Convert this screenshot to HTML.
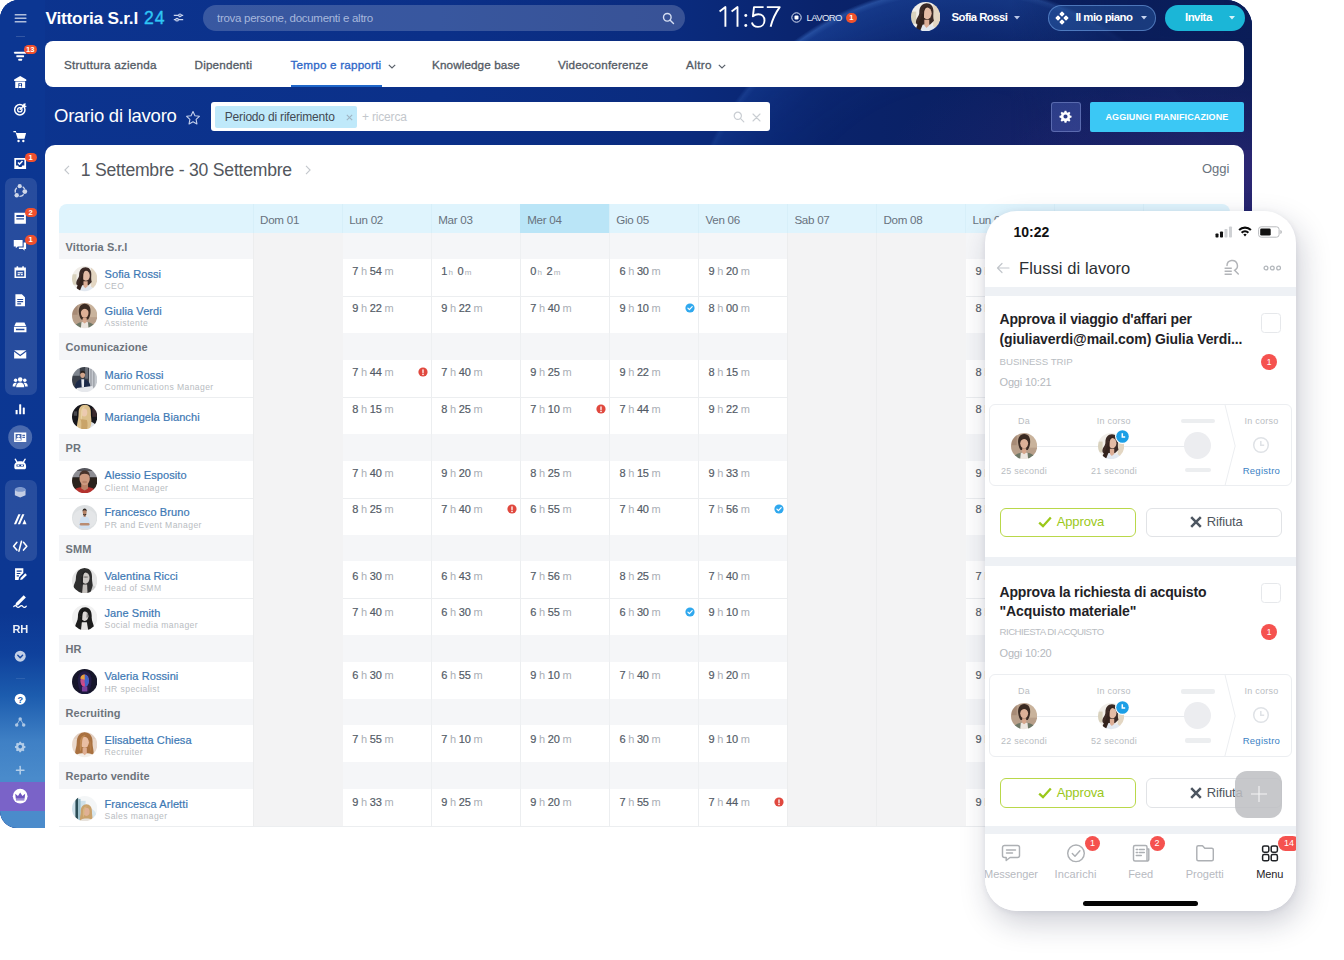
<!DOCTYPE html>
<html lang="it"><head><meta charset="utf-8"><title>Orario di lavoro</title>
<style>

*{box-sizing:border-box;margin:0;padding:0}
html,body{width:1344px;height:960px;overflow:hidden;background:#fff}
body{font-family:"Liberation Sans",sans-serif;position:relative;color:#525c69}
#win{position:absolute;left:0;top:0;width:1252px;height:828px;border-radius:19px 26px 0 17px;overflow:hidden;
 background:#0b2d82}
#bg{position:absolute;left:0;top:0;width:1252px;height:828px;
 background:
  radial-gradient(ellipse 240px 110px at 1240px 175px, rgba(58,42,128,.42), rgba(58,42,128,0) 100%),
  radial-gradient(ellipse 330px 130px at 1215px 165px, rgba(75,48,135,.42), rgba(70,40,110,0) 100%),
  linear-gradient(90deg,#0c348f 0%,#0b3089 35%,#0a2b7e 54%,#0a236b 66%,#0a1f60 82%,#0a1d5a 100%)}
#ring{position:absolute;left:0;top:0;width:1252px;height:150px;
 background:
  linear-gradient(90deg, rgba(10,30,92,0) 1010px, rgba(10,30,92,.85) 1110px, rgba(10,29,88,1) 1252px),
  radial-gradient(circle at 960px 262px, rgba(40,100,210,0) 170px, rgba(40,100,210,.12) 225px, rgba(52,118,225,.27) 268px, rgba(80,145,240,.38) 273px, rgba(40,100,210,0) 277px);
 -webkit-mask-image:linear-gradient(180deg,#000 0,#000 36px,rgba(0,0,0,.5) 90px,rgba(0,0,0,.32) 150px);mask-image:linear-gradient(180deg,#000 0,#000 36px,rgba(0,0,0,.5) 90px,rgba(0,0,0,.32) 150px)}
/* sidebar */
#side{position:absolute;left:0;top:0;width:45px;height:828px;
 background:linear-gradient(180deg,#0c3692 0%,#0c3792 74%,#0f419c 79%,#1c5cae 84%,#3f80c5 89.500%,#4a8bcb 94%,#4b8bcb 100%)}
#side .grp{position:absolute;left:4.600px;width:32px;border-radius:7px;background:rgba(255,255,255,.115)}
#side .ic{position:absolute;left:10.800px;width:18.400px;height:18.400px}
#side .ic svg{display:block;width:18.400px;height:18.400px;overflow:visible}
#side .bd{position:absolute;height:9.400px;min-width:12px;border-radius:5px;background:#f0502d;color:#fff;font-size:7.600px;font-weight:700;line-height:9.600px;text-align:center;padding:0 2.500px}
/* header */
.hx{position:absolute;color:#fff;white-space:nowrap}
/* nav */
#nav{position:absolute;left:47px;top:42px;width:1197px;height:45px;background:#fff;border-radius:8px}
#nav span{position:absolute;top:.800px;line-height:46px;font-size:11.700px;font-weight:400;color:#555c66;-webkit-text-stroke:.32px currentColor;white-space:nowrap}
/* toolbar */
#title{position:absolute;left:54px;top:104px;font-size:18.2px;color:#fff;line-height:24px;white-space:nowrap;letter-spacing:-.35px}
#search{position:absolute;left:211px;top:102px;width:559px;height:29px;background:#fff;border-radius:3px}
#chip{position:absolute;left:4px;top:3px;width:142px;height:23px;background:#bfe9fa;border-radius:2px;font-size:12px;line-height:23px;color:#424a54;padding-left:9px;white-space:nowrap}
/* card */
#card{position:absolute;left:45px;top:145px;width:1199px;height:700px;background:#fff;border-radius:10px 10px 0 0}
#tbl{position:absolute;left:14px;top:59px;width:1171px}
#thead{position:absolute;left:0;top:0;width:1171px;height:28.800px;background:#dff4fd;border-radius:8px 8px 0 0;overflow:hidden}
.hd{position:absolute;top:0;height:28.800px;border-left:1px solid #d7eff9}
.hd span{position:absolute;left:6.400px;top:0;line-height:31px;font-size:11.600px;color:#68727d;white-space:nowrap;letter-spacing:-.27px}
.hd.today{background:#bae5f7;border-left-color:#bae5f7}
#tbody{position:absolute;left:0;top:28.800px;width:1171px;overflow:hidden}
.cl{position:absolute;top:0;bottom:0;border-left:1px solid #eceef0}
.cl.we{background:#f3f4f5}
.gr{position:absolute;left:0;width:1171px;background:rgba(239,241,244,.62)}
.gr span{position:absolute;left:6.600px;top:0;line-height:28px;font-size:11px;font-weight:700;color:#6d747c;white-space:nowrap;letter-spacing:.06px}
.pr{position:absolute;left:0;width:1171px}
.pr.sp{border-bottom:1px solid #eceef0}
.wo{position:absolute;top:0;bottom:1px;background:#f3f3f4;border-left:1px solid #ecedee;z-index:2}
.pr .av{position:absolute;left:12.900px;top:7px}
.pn{position:absolute;left:45.500px;top:7.700px;white-space:nowrap}
.pn a{display:block;font-size:11px;line-height:14px;color:#3c78b4;letter-spacing:.09px;-webkit-text-stroke:.2px currentColor}
.pn em{display:block;font-style:normal;font-size:8.600px;line-height:10px;color:#b8bcc1;letter-spacing:.4px;margin-top:.3px}
.pn.ns{top:13px}
.tc{position:absolute;top:0;width:89px;height:100%;padding:5.900px 0 0 10.500px;font-size:11px;line-height:12px;white-space:nowrap;color:#a9aeb5;letter-spacing:-.22px}
.tc b{font-weight:400;color:#535b66;-webkit-text-stroke:.18px #535b66}
.tc i{font-style:normal}
.tc i.s{font-size:8px;margin:0 1.700px 0 1.300px;letter-spacing:0}
.tc .st{position:absolute;right:3px;top:6.700px}

</style></head>
<body>
<svg width="0" height="0" style="position:absolute"><defs><filter id="avb" x="-10%" y="-10%" width="120%" height="120%"><feGaussianBlur stdDeviation=".55"/></filter></defs></svg>
<div id="win">
<div id="bg"></div><div id="ring"></div>
<div id="side"><div class="grp" style="top:178px;height:217px"></div><div class="grp" style="top:479.500px;height:81.500px"></div><div style="position:absolute;left:0;top:781.700px;width:45px;height:29.100px;background:#7a63c8"></div><div style="position:absolute;left:16px;top:36px;width:8.500px;height:1px;background:rgba(255,255,255,.16)"></div><div style="position:absolute;left:16px;top:678px;width:8.500px;height:1px;background:rgba(255,255,255,.1)"></div><div class="ic" style="top:8.8px;opacity:1"><svg viewBox="0 0 20 20" fill="#fff"><rect x="4" y="5.400" width="12.800" height="1.700" rx=".4" opacity=".68"/><rect x="4" y="9.200" width="12.800" height="1.700" rx=".4" opacity=".68"/><rect x="4" y="13" width="12.800" height="1.700" rx=".4" opacity=".68"/></svg></div><div class="ic" style="top:46.8px;opacity:1"><svg viewBox="0 0 20 20" fill="#fff"><rect x="3.5" y="5.2" width="13" height="2.1" rx=".4"/><rect x="5.8" y="9" width="8.4" height="2.1" rx=".4"/><rect x="8" y="12.8" width="4" height="2.1" rx=".4"/></svg></div><div class="ic" style="top:72.8px;opacity:1"><svg viewBox="0 0 20 20" fill="#fff"><path d="M10 3.2 3.4 7v1.6h13.2V7z"/><path d="M4.6 9.2h10.8v7H4.6z M8 11.2v5h4v-5z" fill-rule="evenodd"/><circle cx="10" cy="12.6" r="1"/><path d="M8.4 16.2c0-1.6.6-2.2 1.6-2.2s1.6.6 1.6 2.2z"/></svg></div><div class="ic" style="top:99.8px;opacity:1"><svg viewBox="0 0 20 20" fill="#fff"><circle cx="9.6" cy="10.6" r="5.6" fill="none" stroke="#fff" stroke-width="1.6"/><circle cx="9.6" cy="10.6" r="2.4" fill="none" stroke="#fff" stroke-width="1.4"/><path d="M9.6 10.6 15.2 5" stroke="#fff" stroke-width="1.5"/><path d="M13.4 4.2l2.6-.8-.6 2.8 2 .2-2.6 2-1.8-1.8z"/></svg></div><div class="ic" style="top:126.8px;opacity:1"><svg viewBox="0 0 20 20" fill="#fff"><path d="M2.6 4.4h2.7l.6 2h10.5l-1.7 6.3H7.2L5 5.8H2.6z"/><circle cx="8.2" cy="15.2" r="1.3"/><circle cx="13.4" cy="15.2" r="1.3"/></svg></div><div class="ic" style="top:153.8px;opacity:1"><svg viewBox="0 0 20 20" fill="#fff"><path d="M3.6 4.4h12.8v11.8H3.6z M5.5 6.3v6.2h2.2l.9 1.6h2.8l.9-1.6h2.2V6.3z" fill-rule="evenodd"/><path d="M7.6 9.3l1.7 1.7 3.2-3.4" fill="none" stroke="#fff" stroke-width="1.6"/></svg></div><div class="ic" style="top:181.8px;opacity:1"><svg viewBox="0 0 20 20" fill="#fff"><g opacity=".78"><circle cx="9.500" cy="4.600" r="2.300"/><circle cx="15" cy="10.400" r="2.600"/><circle cx="6.200" cy="14.400" r="2.400"/><path d="M6.2 6.3a5.4 5.4 0 0 0-1.5 5.2M12.7 5.2a5.4 5.4 0 0 1 2.2 2.6M9.2 15.6a5.4 5.4 0 0 0 4.6-2.2" fill="none" stroke="#fff" stroke-width="1.5"/></g></svg></div><div class="ic" style="top:208.8px;opacity:1"><svg viewBox="0 0 20 20" fill="#fff"><path d="M3.8 4.2h12.4v11.8H3.8z M5.8 6.4v2.2h8.4V6.4z M5.8 10v1.4h8.4V10z" fill-rule="evenodd"/></svg></div><div class="ic" style="top:235.8px;opacity:1"><svg viewBox="0 0 20 20" fill="#fff"><path d="M3 4.4h9.6v7H7.4l-2.2 2v-2H3z"/><path d="M13.8 7.2h2.6v7h-1.6v1.9l-2-1.9H8.6v-1.6h5.2z"/></svg></div><div class="ic" style="top:262.8px;opacity:1"><svg viewBox="0 0 20 20" fill="#fff"><path d="M3.8 5h12.4v11.4H3.8z M5.6 8.2v6.4h8.8V8.2z" fill-rule="evenodd"/><rect x="6" y="3.4" width="1.8" height="3" rx=".5"/><rect x="12.2" y="3.4" width="1.8" height="3" rx=".5"/><rect x="7.2" y="10" width="5.6" height="1.3"/><rect x="7.2" y="12" width="2.4" height="1.3"/><rect x="10.6" y="12" width="2.2" height="1.3"/></svg></div><div class="ic" style="top:290.8px;opacity:1"><svg viewBox="0 0 20 20" fill="#fff"><path d="M4.8 3.4h7l3.4 3.4v9.8H4.8z M6.8 8.6v1.3h6.4V8.6z M6.8 11v1.3h6.4V11z M6.8 13.4v1.3h4.2v-1.3z" fill-rule="evenodd"/></svg></div><div class="ic" style="top:317.8px;opacity:1"><svg viewBox="0 0 20 20" fill="#fff"><path d="M5.4 5h9.2l1.8 3.6H3.6z"/><path d="M3.2 9.6h13.6v5.8H3.2z M5.4 11.8v1.4h9.2v-1.4z" fill-rule="evenodd"/></svg></div><div class="ic" style="top:344.8px;opacity:1"><svg viewBox="0 0 20 20" fill="#fff"><path d="M3.4 5.6h13.2L10 10.6z"/><path d="M3.4 7.4 10 12.3l6.6-4.9v7.3H3.4z"/></svg></div><div class="ic" style="top:372.8px;opacity:1"><svg viewBox="0 0 20 20" fill="#fff"><circle cx="10" cy="7" r="2.5"/><path d="M5.6 15.4c0-3.4 1.6-5 4.4-5s4.4 1.6 4.4 5z"/><circle cx="5" cy="8" r="1.9"/><path d="M1.8 14.6c0-2.6 1-4 3.2-4 .6 0 1 .1 1.300.300-1 1-1.500 2.300-1.600 3.700z"/><circle cx="15" cy="8" r="1.9"/><path d="M18.2 14.6c0-2.6-1-4-3.200-4-.6 0-1 .1-1.300.3 1 1 1.500 2.300 1.600 3.700z"/></svg></div><div class="ic" style="top:399.8px;opacity:1"><svg viewBox="0 0 20 20" fill="#fff"><rect x="5" y="10.8" width="2.2" height="4.8" rx=".5"/><rect x="8.9" y="4.6" width="2.2" height="11" rx=".5"/><rect x="12.8" y="8.2" width="2.2" height="7.4" rx=".5"/></svg></div><div class="ic" style="top:427.8px;opacity:1"><svg viewBox="0 0 20 20" fill="#fff"><circle cx="10" cy="10" r="13" opacity=".26"/><path d="M3.4 5h13.2v10.2H3.400z M5 6.500v7.200h6.400V6.500z M12.400 7.400v1.200h2.800V7.400z M12.400 9.600v1.200h2.800V9.600z" fill-rule="evenodd"/><circle cx="8.2" cy="9" r="1.400"/><path d="M5.600 13.400c0-1.900.9-2.700 2.600-2.700s2.600.8 2.600 2.700z"/></svg></div><div class="ic" style="top:454.8px;opacity:1"><svg viewBox="0 0 20 20" fill="#fff"><path d="M3.6 12c0-3.200 2.600-5.200 6.400-5.200s6.400 2 6.400 5.200v1.600c0 1.200-.8 2-2 2H5.600c-1.200 0-2-.8-2-2z M6 10.200v2.200h8v-2.200z" fill-rule="evenodd"/><path d="M6.400 7.400 4.600 4.600M13.600 7.400l1.800-2.800" stroke="#fff" stroke-width="1.500" stroke-linecap="round"/><rect x="7" y="10.600" width="2" height="1.300"/><rect x="11" y="10.600" width="2" height="1.300"/></svg></div><div class="ic" style="top:482.8px;opacity:1"><svg viewBox="0 0 20 20" fill="#fff"><g opacity=".72"><path d="M4.200 7 10 4.400 15.800 7v6.200L10 15.800 4.200 13.200z"/><ellipse cx="10" cy="7" rx="5.800" ry="2.600" fill="#9fb6e0"/></g></svg></div><div class="ic" style="top:509.8px;opacity:1"><svg viewBox="0 0 20 20" fill="#fff"><path d="M3.200 15.400 8 4.600h2.400L5.600 15.400z M7.400 15.400l4.800-10.800h2.400L9.800 15.400z M12.400 15.400l2.300-5.200 2.200 5.200z"/></svg></div><div class="ic" style="top:536.8px;opacity:1"><svg viewBox="0 0 20 20" fill="#fff"><path d="M6.400 5.800 2.800 10l3.600 4.200M13.600 5.800l3.600 4.200-3.600 4.200M11.400 4.600 8.600 15.400" fill="none" stroke="#fff" stroke-width="1.700" stroke-linecap="round" stroke-linejoin="round"/></svg></div><div class="ic" style="top:564.8px;opacity:1"><svg viewBox="0 0 20 20" fill="#fff"><path d="M4.400 3.600h9v5.200l-4.600 4.600-.6 3H4.400z M6.200 6v1.300h5.400V6z M6.200 8.600v1.300h4V8.600z M6.200 11.200v1.300h2.400v-1.300z" fill-rule="evenodd"/><path d="M10 16.400l.5-2.300 5-5 1.800 1.800-5 5z"/></svg></div><div class="ic" style="top:591.8px;opacity:1"><svg viewBox="0 0 20 20" fill="#fff"><path d="M5.400 12 13.800 3.600l2.400 2.400L7.800 14.400 4.600 15.200z"/><path d="M3 15.800c1.200-1.300 2.200-1.300 3.200 0s2.200 1.300 3.400 0 2.400-1.300 3.400 0 2.200 1.200 3.600-.3" fill="none" stroke="#fff" stroke-width="1.300" stroke-linecap="round"/></svg></div><div class="ic" style="top:619.8px;opacity:1"><svg viewBox="0 0 20 20" fill="#fff"><text x="10" y="14.300" font-family="Liberation Sans" font-weight="700" font-size="12" text-anchor="middle" opacity=".92" letter-spacing="-.2">RH</text></svg></div><div class="ic" style="top:646.8px;opacity:1"><svg viewBox="0 0 20 20" fill="#fff"><g opacity=".75"><circle cx="10" cy="10" r="6"/><path d="M7.400 9 10 11.600 12.600 9" fill="none" stroke="#1a4aa4" stroke-width="1.600" stroke-linecap="round" stroke-linejoin="round"/></g></svg></div><div class="ic" style="top:689.8px;opacity:1"><svg viewBox="0 0 20 20" fill="#fff"><circle cx="10" cy="10" r="6"/><text x="10" y="13.600" font-family="Liberation Sans" font-weight="700" font-size="10" text-anchor="middle" fill="#1d5fb2">?</text></svg></div><div class="ic" style="top:712.8px;opacity:1"><svg viewBox="0 0 20 20" fill="#fff"><g opacity=".6"><circle cx="10" cy="6.400" r="1.900"/><circle cx="6.200" cy="13" r="1.900"/><circle cx="13.800" cy="13" r="1.900"/><path d="M10 6.400 6.200 13M10 6.400 13.800 13" stroke="#fff" stroke-width="1"/></g></svg></div><div class="ic" style="top:736.8px;opacity:1"><svg viewBox="0 0 20 20" fill="#fff"><g opacity=".6"><path d="M10 4.600l1 .1.500 1.500 1.100.5 1.400-.7 1.400 1.400-.7 1.400.5 1.100 1.500.5v2l-1.500.5-.5 1.100.7 1.400-1.400 1.400-1.400-.7-1.100.5-.5 1.500h-2l-.5-1.500-1.100-.5-1.400.7-1.400-1.400.7-1.400-.5-1.100-1.500-.5v-2l1.500-.5.500-1.100-.7-1.400 1.400-1.400 1.400.7 1.100-.5.500-1.500z" transform="translate(1.500 1.200) scale(.85)"/><circle cx="10" cy="10.400" r="2" fill="#3474bd"/></g></svg></div><div class="ic" style="top:760.8px;opacity:1"><svg viewBox="0 0 20 20" fill="#fff"><g opacity=".6"><rect x="9.200" y="5.200" width="1.600" height="9.600" rx=".5"/><rect x="5.200" y="9.200" width="9.600" height="1.600" rx=".5"/></g></svg></div><div class="ic" style="top:786.8px;opacity:1"><svg viewBox="0 0 20 20" fill="#fff"><circle cx="10" cy="10" r="8"/><path d="M5.200 12.800 4.600 7.400l3 2.400L10 6l2.400 3.800 3-2.400-.6 5.400z" fill="#6f55c0"/><rect x="5.400" y="13.400" width="9.200" height="1.200" fill="#6f55c0"/></svg></div><div class="bd" style="left:23.500px;top:44.600px">13</div><div class="bd" style="left:24.500px;top:152.800px">1</div><div class="bd" style="left:24.500px;top:208px">2</div><div class="bd" style="left:24.500px;top:235.300px">1</div></div>
<div class="hx" style="left:45.500px;top:7px;font-size:17.300px;line-height:22px;font-weight:700;letter-spacing:-.23px">Vittoria S.r.l</div><div class="hx" style="left:144px;top:7px;font-size:17.600px;line-height:22px;color:#2fc6f6;letter-spacing:.9px;-webkit-text-stroke:.35px #2fc6f6">24</div><svg style="position:absolute;left:173px;top:12px" width="11" height="11" viewBox="0 0 11 11" fill="none" stroke="#c9d4ee" stroke-width="1.200"><path d="M.8 3.300h9.400M.8 7.700h9.400"/><circle cx="7" cy="3.300" r="1.300" fill="#0c338c"/><circle cx="4" cy="7.700" r="1.300" fill="#0c338c"/></svg><div style="position:absolute;left:203px;top:5px;width:482px;height:25.500px;border-radius:13px;background:rgba(255,255,255,.19)"></div><div class="hx" style="left:217px;top:11px;font-size:11.500px;line-height:14px;color:#a7b7dc;letter-spacing:-.28px">trova persone, documenti e altro</div><svg style="position:absolute;left:661.500px;top:11.500px" width="13" height="13" viewBox="0 0 13 13" fill="none" stroke="#d5def2" stroke-width="1.400" stroke-linecap="round"><circle cx="5.300" cy="5.300" r="3.800"/><path d="M8.200 8.200l3.300 3.300"/></svg><svg style="position:absolute;left:715px;top:0" width="70" height="36" viewBox="715 0 70 36" fill="none" stroke="#fff" stroke-width="1.900" stroke-linejoin="round"><path d="M719.600 11.600 725.400 7.100V26.800"/><path d="M731.600 11.600 737.500 7.100V26.800"/><circle cx="745.800" cy="15.500" r="1.450" fill="#fff" stroke="none"/><circle cx="745.800" cy="25.500" r="1.450" fill="#fff" stroke="none"/><path d="M763.600 7.100H754L752.900 16.400C754.500 14.900 756.300 14.200 758.300 14.200 762 14.200 764.500 16.800 764.500 20.400 764.500 24.300 761.800 26.900 758 26.900 754.800 26.900 752.600 25.200 751.900 22.500"/><path d="M766.800 7.100H779.700C775.500 13 772.300 19.500 770.600 26.800"/></svg><svg style="position:absolute;left:791px;top:12.300px" width="11" height="11" viewBox="0 0 11 11"><circle cx="5.500" cy="5.500" r="4.700" fill="none" stroke="#dfe6f6" stroke-width="1"/><rect x="3.500" y="3.500" width="4" height="4" rx="1" fill="#fff"/></svg><div class="hx" style="left:806.500px;top:12px;font-size:9.500px;line-height:12px;letter-spacing:-.62px;color:#e6ecf8">LAVORO</div><div style="position:absolute;left:845.500px;top:13.200px;width:11.500px;height:9.600px;border-radius:5px;background:#f0522c;color:#fff;font-size:7.500px;line-height:9.600px;text-align:center;font-weight:700">1</div><svg class="av" style="position:absolute;left:910.900px;top:2.100px" width="29.4" height="29.4" viewBox="0 0 26 26"><defs><clipPath id="hav"><circle cx="13" cy="13" r="13"/></clipPath></defs><g clip-path="url(#hav)"><g filter="url(#avb)"><g transform="translate(13 11.500) scale(1.2) translate(-13 -11.500)"><rect width="26" height="26" fill="#f1eee9"/><rect x="18.500" width="8" height="26" fill="#e3d6c2"/><rect x="0" y="9" width="6" height="9" fill="#d9d2bd"/><path d="M8.300 9.500c0-4 2.100-6.600 5.400-6.600 3.200 0 5 2.400 5 5.800 0 2.500-.4 4.500.4 7l-3 3H7.500c-1.400 0-2-1.500-1.600-3 .9-3 2.400-3.400 2.400-6.200z" fill="#3b2a25"/><path d="M3.500 27c.3-5.500 4-8.500 9.500-8.500s9.800 3 10.200 8.500z" fill="#e2e8f0"/><path d="M12 15h3.600v4.300L13.600 21 12 19.300z" fill="#dcae96"/><ellipse cx="14.100" cy="10.300" rx="3.300" ry="4.300" fill="#e4bca5"/><path d="M10.800 8.500c.5-2.500 2-3.700 4.300-3.500-1.500.5-2.800 1.800-3.200 4-.3 2.500.2 5.500-.8 8.500s-2 5-2.400 6.500L5.600 23c.4-3 1.600-4.600 2.700-7 1-2.300 2-4.600 2.500-7.500z" fill="#33231f"/></g></g></g></svg><div class="hx" style="left:951.500px;top:10.400px;font-size:11.400px;line-height:14px;font-weight:700;letter-spacing:-.56px">Sofia Rossi</div><svg style="position:absolute;left:1013.500px;top:16px" width="6" height="4" viewBox="0 0 6 4"><path d="M0 0h6L3 3.600z" fill="#b9c6e6"/></svg><div style="position:absolute;left:1047.500px;top:5px;width:108.500px;height:25.500px;border-radius:13px;background:rgba(60,120,200,.32);border:1px solid rgba(120,170,235,.55)"></div><svg style="position:absolute;left:1055px;top:11px" width="14" height="14" viewBox="0 0 14 14" fill="#fff"><rect x="5" y="1" width="4" height="4" rx=".8" transform="rotate(45 7 3)"/><rect x="5" y="9" width="4" height="4" rx=".8" transform="rotate(45 7 11)"/><rect x="1" y="5" width="4" height="4" rx=".8" transform="rotate(45 3 7)"/><rect x="9" y="5" width="4" height="4" rx=".8" transform="rotate(45 11 7)"/></svg><div class="hx" style="left:1075.500px;top:10.400px;font-size:11.400px;line-height:14px;font-weight:700;letter-spacing:-.54px">Il mio piano</div><svg style="position:absolute;left:1140.500px;top:16px" width="6" height="4" viewBox="0 0 6 4"><path d="M0 0h6L3 3.600z" fill="#c6d3ee"/></svg><div style="position:absolute;left:1165px;top:5px;width:79.500px;height:25.500px;border-radius:13px;background:#1bb6d7"></div><div class="hx" style="left:1185px;top:10.400px;font-size:11.400px;line-height:14px;font-weight:700;letter-spacing:-.5px">Invita</div><svg style="position:absolute;left:1228.500px;top:16px" width="6" height="4" viewBox="0 0 6 4"><path d="M0 0h6L3 3.600z" fill="#d7f3fa"/></svg>
<div id="nav" style="left:45px;top:41px;width:1199px;height:46px"><span style="left:19px;letter-spacing:.22px">Struttura azienda</span><span style="left:149.500px;letter-spacing:.19px">Dipendenti</span><span style="left:245.500px;letter-spacing:.2px;color:#2f68c8">Tempo e rapporti</span><svg style="position:absolute;left:342.500px;top:22.800px" width="8" height="5" viewBox="0 0 8 5" fill="none" stroke="#5a616b" stroke-width="1.200"><path d="M.8.800 4 4l3.200-3.200"/></svg><div style="position:absolute;left:245.500px;top:44.200px;width:91px;height:1.800px;background:#2067c9"></div><span style="left:387px;letter-spacing:.11px">Knowledge base</span><span style="left:513px;letter-spacing:.17px">Videoconferenze</span><span style="left:641px;letter-spacing:.39px">Altro</span><svg style="position:absolute;left:673px;top:22.800px" width="8" height="5" viewBox="0 0 8 5" fill="none" stroke="#5a616b" stroke-width="1.200"><path d="M.8.800 4 4l3.200-3.200"/></svg></div>
<div id="title" style="font-size:18.500px;letter-spacing:-.24px">Orario di lavoro</div><svg style="position:absolute;left:184.500px;top:109.500px" width="16" height="16" viewBox="0 0 16 16" fill="none" stroke="#c4d0ec" stroke-width="1.100" stroke-linejoin="round"><path d="M8 1.600l1.950 4.150 4.450.55-3.300 3.100.85 4.500L8 11.700 4.050 13.900l.85-4.500L1.600 6.300l4.450-.55z"/></svg><div id="search"><div id="chip" style="left:4px;top:3.500px;width:142.300px;height:22.600px;line-height:22.600px;padding-left:9.800px;letter-spacing:-.19px">Periodo di riferimento<svg style="position:absolute;left:131px;top:8px" width="7" height="7" viewBox="0 0 7 7" stroke="#9fb4c2" stroke-width="1.100"><path d="M.8.800l5.400 5.400M6.200.800.800 6.200"/></svg></div><div style="position:absolute;left:151px;top:8px;font-size:12px;line-height:14px;color:#c3c7cc;letter-spacing:-.18px;white-space:nowrap">+ ricerca</div><svg style="position:absolute;left:522px;top:9px" width="12" height="12" viewBox="0 0 12 12" fill="none" stroke="#c9cdd2" stroke-width="1.200" stroke-linecap="round"><circle cx="4.800" cy="4.800" r="3.600"/><path d="M7.600 7.600l3.200 3.200"/></svg><svg style="position:absolute;left:540.500px;top:10.500px" width="9" height="9" viewBox="0 0 9 9" stroke="#c9cdd2" stroke-width="1.100" stroke-linecap="round"><path d="M1 1l7 7M8 1 1 8"/></svg></div><div style="position:absolute;left:1050.500px;top:101.500px;width:30.500px;height:30px;border-radius:3px;background:rgba(120,140,235,.27);border:1px solid rgba(170,185,240,.36)"></div><svg style="position:absolute;left:1059px;top:110px" width="13" height="13" viewBox="0 0 20 20" fill="#fff"><path d="M8.600 1h2.800l.5 2.400 1.700.7 2-1.400 2 2-1.400 2 .7 1.700 2.400.5v2.800l-2.400.5-.7 1.700 1.400 2-2 2-2-1.400-1.700.7-.5 2.400H8.600l-.5-2.400-1.700-.7-2 1.400-2-2 1.400-2-.7-1.700L.7 11.700V8.900l2.400-.5.700-1.700-1.400-2 2-2 2 1.400 1.700-.7z M10 6.800a3.200 3.200 0 1 0 0 6.400 3.200 3.200 0 0 0 0-6.400z" fill-rule="evenodd"/></svg><div style="position:absolute;left:1089.700px;top:101.500px;width:154.500px;height:30px;border-radius:2px;background:#3bc8f5;color:#fff;font-size:9px;font-weight:700;line-height:30px;text-align:center;letter-spacing:.11px;white-space:nowrap">AGGIUNGI PIANIFICAZIONE</div>
<div id="card">
  <svg style="position:absolute;left:18.500px;top:19.500px" width="6" height="10" viewBox="0 0 6 10" fill="none" stroke="#c3c7cc" stroke-width="1.100"><path d="M5 .8.900 5 5 9.200"/></svg><div style="position:absolute;left:35.800px;top:13px;font-size:17.600px;line-height:24px;color:#53575d;letter-spacing:-.23px;white-space:nowrap">1 Settembre - 30 Settembre</div><svg style="position:absolute;left:259.500px;top:19.500px" width="6" height="10" viewBox="0 0 6 10" fill="none" stroke="#c3c7cc" stroke-width="1.100"><path d="M1 .8 5.100 5 1 9.200"/></svg><div style="position:absolute;left:1157px;top:16px;font-size:13px;line-height:16px;color:#69727d;white-space:nowrap">Oggi</div>
  <div id="tbl" style="height:622.0px">
    <div id="thead"><div class="hd" style="left:193.7px;width:89.0px"><span>Dom 01</span></div><div class="hd" style="left:282.8px;width:89.0px"><span>Lun 02</span></div><div class="hd" style="left:371.8px;width:89.0px"><span>Mar 03</span></div><div class="hd today" style="left:460.8px;width:89.0px"><span>Mer 04</span></div><div class="hd" style="left:549.9px;width:89.0px"><span>Gio 05</span></div><div class="hd" style="left:639.0px;width:89.0px"><span>Ven 06</span></div><div class="hd" style="left:728.0px;width:89.0px"><span>Sab 07</span></div><div class="hd" style="left:817.0px;width:89.0px"><span>Dom 08</span></div><div class="hd" style="left:906.1px;width:89.0px"><span>Lun 09</span></div><div class="hd" style="left:995.1px;width:89.0px"><span>Mar 10</span></div><div class="hd" style="left:1084.2px;width:89.0px"><span>Mer 11</span></div></div>
    <div id="tbody" style="height:594.2px">
      <div class="cl we" style="left:193.7px;width:89.0px"></div><div class="cl" style="left:282.8px;width:89.0px"></div><div class="cl" style="left:371.8px;width:89.0px"></div><div class="cl" style="left:460.8px;width:89.0px"></div><div class="cl" style="left:549.9px;width:89.0px"></div><div class="cl" style="left:639.0px;width:89.0px"></div><div class="cl we" style="left:728.0px;width:89.0px"></div><div class="cl we" style="left:817.0px;width:89.0px"></div><div class="cl" style="left:906.1px;width:89.0px"></div><div class="cl" style="left:995.1px;width:89.0px"></div><div class="cl" style="left:1084.2px;width:89.0px"></div>
      <div class="gr" style="top:0.0px;height:26.6px"><span>Vittoria S.r.l</span></div>
<div class="pr sp" style="top:26.6px;height:38.0px"><svg class="av" style="" width="25.3" height="25.3" viewBox="0 0 26 26"><defs><clipPath id="a1"><circle cx="13" cy="13" r="13"/></clipPath></defs><g clip-path="url(#a1)"><g filter="url(#avb)"><g transform="translate(13 11.500) scale(1.2) translate(-13 -11.500)"><rect width="26" height="26" fill="#f1eee9"/><rect x="18.500" width="8" height="26" fill="#e3d6c2"/><rect x="0" y="9" width="6" height="9" fill="#d9d2bd"/><path d="M8.300 9.500c0-4 2.100-6.600 5.400-6.600 3.200 0 5 2.400 5 5.800 0 2.500-.4 4.500.4 7l-3 3H7.500c-1.400 0-2-1.500-1.600-3 .9-3 2.400-3.400 2.400-6.200z" fill="#3b2a25"/><path d="M3.500 27c.3-5.500 4-8.500 9.500-8.500s9.800 3 10.200 8.500z" fill="#e2e8f0"/><path d="M12 15h3.600v4.300L13.600 21 12 19.300z" fill="#dcae96"/><ellipse cx="14.100" cy="10.300" rx="3.300" ry="4.300" fill="#e4bca5"/><path d="M10.800 8.500c.5-2.500 2-3.700 4.300-3.500-1.500.5-2.800 1.800-3.200 4-.3 2.500.2 5.500-.8 8.500s-2 5-2.400 6.500L5.600 23c.4-3 1.600-4.600 2.700-7 1-2.300 2-4.600 2.500-7.500z" fill="#33231f"/></g></g></g></svg><div class="pn"><a>Sofia Rossi</a><em>CEO</em></div><div class="tc" style="left:282.8px;top:0px"><b>7</b> <i>h</i> <b>54</b> <i>m</i></div><div class="tc" style="left:371.8px;top:0px"><b>1</b><i class="s">h</i> <b>0</b><i class="s">m</i></div><div class="tc" style="left:460.8px;top:0px"><b>0</b><i class="s">h</i> <b>2</b><i class="s">m</i></div><div class="tc" style="left:549.9px;top:0px"><b>6</b> <i>h</i> <b>30</b> <i>m</i></div><div class="tc" style="left:639.0px;top:0px"><b>9</b> <i>h</i> <b>20</b> <i>m</i></div><div class="tc" style="left:906.1px;top:0px"><b>9</b> <i>h</i></div></div>
<div class="pr" style="top:63.6px;height:38.0px"><svg class="av" style="" width="25.3" height="25.3" viewBox="0 0 26 26"><defs><clipPath id="a2"><circle cx="13" cy="13" r="13"/></clipPath></defs><g clip-path="url(#a2)"><g filter="url(#avb)"><g transform="translate(13 11.500) scale(1.22) translate(-13 -11.500)"><rect width="26" height="26" fill="#b89f8a"/><rect x="17" y="0" width="9" height="14" fill="#c9b39c"/><rect x="0" y="0" width="7" height="12" fill="#a78b76"/><path d="M8.200 10.500c-.6-4.500 1.500-7.700 4.900-7.700s5.400 3 4.800 7.600c-.3 2.500-1 4.200-2 5.600h-5.700c-1-1.400-1.700-3-2-5.500z" fill="#3a2a23"/><path d="M2.500 27c.2-5.600 3.500-9 10.500-9s10.300 3.400 10.500 9z" fill="#6e7766"/><path d="M10.300 18.300 13 17.600l2.800.7.800 8.700H9.500z" fill="#ece6df"/><path d="M11.400 14.500h3.300v3.600l-1.700 1.200-1.600-1.200z" fill="#d5a58b"/><ellipse cx="13.050" cy="10.500" rx="3.200" ry="4.100" fill="#ddb097"/><path d="M9.800 9.300c.3-2.700 1.600-4 3.300-4s3 1.300 3.300 4c-1-1.500-2-2.300-3.300-2.300s-2.300.8-3.300 2.300z" fill="#3a2a23"/></g></g></g></svg><div class="pn"><a>Giulia Verdi</a><em>Assistente</em></div><div class="tc" style="left:282.8px;top:0px"><b>9</b> <i>h</i> <b>22</b> <i>m</i></div><div class="tc" style="left:371.8px;top:0px"><b>9</b> <i>h</i> <b>22</b> <i>m</i></div><div class="tc" style="left:460.8px;top:0px"><b>7</b> <i>h</i> <b>40</b> <i>m</i></div><div class="tc" style="left:549.9px;top:0px"><b>9</b> <i>h</i> <b>10</b> <i>m</i><svg class="st" width="10" height="10" viewBox="0 0 10 10"><circle cx="5" cy="5" r="4.6" fill="#2fa8ee"/><path d="M2.9 5.1l1.5 1.5 2.8-3" fill="none" stroke="#fff" stroke-width="1.2" stroke-linecap="round" stroke-linejoin="round"/></svg></div><div class="tc" style="left:639.0px;top:0px"><b>8</b> <i>h</i> <b>00</b> <i>m</i></div><div class="tc" style="left:906.1px;top:0px"><b>8</b> <i>h</i></div></div>
<div class="gr" style="top:100.6px;height:26.6px"><span>Comunicazione</span></div>
<div class="pr sp" style="top:127.2px;height:38.0px"><svg class="av" style="" width="25.3" height="25.3" viewBox="0 0 26 26"><defs><clipPath id="a3"><circle cx="13" cy="13" r="13"/></clipPath></defs><g clip-path="url(#a3)"><g filter="url(#avb)"><rect width="26" height="26" fill="#3b3f49"/><rect x="17.500" width="9" height="26" fill="#c5c9cf"/><rect x="19" y="2" width="1" height="20" fill="#8c9097"/><rect x="22" y="2" width="1" height="20" fill="#8c9097"/><rect x="13.500" y="0" width="3" height="12" fill="#6a6e77"/><rect x="0" y="0" width="8" height="9" fill="#7f858e"/><path d="M3 22c0-6 2.500-9.500 8-9.500s8 3.500 8 9.500z" fill="#1e2b49"/><path d="M9.500 12.600h3L12.300 21H10z" fill="#e7eaf0"/><ellipse cx="10.900" cy="8" rx="2.500" ry="3.200" fill="#d2a58b"/><path d="M8.300 7.400c0-2.300 1-3.500 2.700-3.500s2.700 1.200 2.600 3.200c-.8-1-1.700-1.300-2.800-1.300-1 0-1.900.5-2.500 1.600z" fill="#2b221f"/><path d="M5 21.500 21 19.500 24 26H3z" fill="#e6e8ec"/></g></g></svg><div class="pn"><a>Mario Rossi</a><em>Communications Manager</em></div><div class="tc" style="left:282.8px;top:0px"><b>7</b> <i>h</i> <b>44</b> <i>m</i><svg class="st" width="10" height="10" viewBox="0 0 10 10"><circle cx="5" cy="5" r="4.6" fill="#e0483e"/><rect x="4.35" y="2.2" width="1.3" height="3.7" rx=".5" fill="#fff"/><circle cx="5" cy="7.4" r=".8" fill="#fff"/></svg></div><div class="tc" style="left:371.8px;top:0px"><b>7</b> <i>h</i> <b>40</b> <i>m</i></div><div class="tc" style="left:460.8px;top:0px"><b>9</b> <i>h</i> <b>25</b> <i>m</i></div><div class="tc" style="left:549.9px;top:0px"><b>9</b> <i>h</i> <b>22</b> <i>m</i></div><div class="tc" style="left:639.0px;top:0px"><b>8</b> <i>h</i> <b>15</b> <i>m</i></div><div class="tc" style="left:906.1px;top:0px"><b>8</b> <i>h</i></div></div>
<div class="pr" style="top:164.2px;height:38.0px"><svg class="av" style="" width="25.3" height="25.3" viewBox="0 0 26 26"><defs><clipPath id="a4"><circle cx="13" cy="13" r="13"/></clipPath></defs><g clip-path="url(#a4)"><g filter="url(#avb)"><g transform="translate(13 11.500) scale(1.12) translate(-13 -11.500)"><rect width="26" height="26" fill="#18171a"/><rect x="3" y="8" width="3" height="4" fill="#4a4a50"/><rect x="20" y="5" width="4" height="8" fill="#3a2a2e"/><path d="M16 17c3 0 8 1.500 9 9H14z" fill="#dfe3e8"/><path d="M7.500 9c0-4.500 2.500-7 5.800-7 3.500 0 5.600 2.800 5.400 7-.2 3.500.8 6 .5 9.500-.3 3.700-2.200 7.500-5.500 7.500H8.500c-2.500 0-3-2.500-2.500-5.500.5-3.500 1.500-6.500 1.500-11.500z" fill="#dcc08c"/><path d="M9 15c1.500 2.500 1 7 .5 11h5c1.500-3 1.500-7 .5-10z" fill="#c9a469"/><ellipse cx="12.700" cy="9" rx="2.700" ry="3.700" fill="#eccab0"/><path d="M9.800 8.500c.2-3.500 1.800-5.200 4-5-1.800 1-2.600 2.600-2.800 5-.2 2.500-.2 5-1.200 7.500-.5-2.500-.2-5 0-7.500z" fill="#e9d3a4"/></g></g></g></svg><div class="pn ns"><a>Mariangela Bianchi</a><em></em></div><div class="tc" style="left:282.8px;top:0px"><b>8</b> <i>h</i> <b>15</b> <i>m</i></div><div class="tc" style="left:371.8px;top:0px"><b>8</b> <i>h</i> <b>25</b> <i>m</i></div><div class="tc" style="left:460.8px;top:0px"><b>7</b> <i>h</i> <b>10</b> <i>m</i><svg class="st" width="10" height="10" viewBox="0 0 10 10"><circle cx="5" cy="5" r="4.6" fill="#e0483e"/><rect x="4.35" y="2.2" width="1.3" height="3.7" rx=".5" fill="#fff"/><circle cx="5" cy="7.4" r=".8" fill="#fff"/></svg></div><div class="tc" style="left:549.9px;top:0px"><b>7</b> <i>h</i> <b>44</b> <i>m</i></div><div class="tc" style="left:639.0px;top:0px"><b>9</b> <i>h</i> <b>22</b> <i>m</i></div><div class="tc" style="left:906.1px;top:0px"><b>8</b> <i>h</i></div></div>
<div class="gr" style="top:201.2px;height:26.6px"><span>PR</span></div>
<div class="pr sp" style="top:227.8px;height:38.0px"><svg class="av" style="" width="25.3" height="25.3" viewBox="0 0 26 26"><defs><clipPath id="a5"><circle cx="13" cy="13" r="13"/></clipPath></defs><g clip-path="url(#a5)"><g filter="url(#avb)"><rect width="26" height="26" fill="#2a201f"/><rect y="3" width="26" height="6.500" fill="#8e8e94"/><rect y="0" width="26" height="3" fill="#55555b"/><path d="M1 27c.5-5 3-7.500 12-7.500S24.500 22 25 27z" fill="#b3322f"/><path d="M9.500 16.500h7v4.500L13 23l-3.500-2z" fill="#b98268"/><ellipse cx="13" cy="11" rx="5.300" ry="6.700" fill="#cd9a80"/><path d="M7.600 9.500C7.300 5 9.500 2.500 13 2.500s5.700 2.500 5.400 7c-.8-2.300-2.400-3.500-5.400-3.500s-4.600 1.200-5.400 3.500z" fill="#46302a"/><ellipse cx="13" cy="14.500" rx="2.600" ry="1.300" fill="#b8836b"/></g></g></svg><div class="pn"><a>Alessio Esposito</a><em>Client Manager</em></div><div class="tc" style="left:282.8px;top:0.3px"><b>7</b> <i>h</i> <b>40</b> <i>m</i></div><div class="tc" style="left:371.8px;top:0.3px"><b>9</b> <i>h</i> <b>20</b> <i>m</i></div><div class="tc" style="left:460.8px;top:0.3px"><b>8</b> <i>h</i> <b>25</b> <i>m</i></div><div class="tc" style="left:549.9px;top:0.3px"><b>8</b> <i>h</i> <b>15</b> <i>m</i></div><div class="tc" style="left:639.0px;top:0.3px"><b>9</b> <i>h</i> <b>33</b> <i>m</i></div><div class="tc" style="left:906.1px;top:0.3px"><b>9</b> <i>h</i></div></div>
<div class="pr" style="top:264.8px;height:38.0px"><svg class="av" style="" width="25.3" height="25.3" viewBox="0 0 26 26"><defs><clipPath id="a6"><circle cx="13" cy="13" r="13"/></clipPath></defs><g clip-path="url(#a6)"><g filter="url(#avb)"><rect width="26" height="26" fill="#dde0e2"/><ellipse cx="13" cy="14" rx="12" ry="10" fill="#e4e6e8"/><path d="M7.500 24c0-8 .5-12.500 5.500-12.500S18.500 16 18.500 24z" fill="#cfe0f1"/><rect x="8" y="18.500" width="10" height="2.600" rx="1.200" fill="#b98c72"/><rect x="11.900" y="9.500" width="2.200" height="2.600" fill="#a9795f"/><ellipse cx="13" cy="7.300" rx="2.100" ry="2.700" fill="#b58468"/><path d="M10.800 6.600c0-1.800.9-2.900 2.200-2.900s2.200 1.100 2.200 2.900c-.6-.8-1.300-1.200-2.200-1.200s-1.600.4-2.200 1.200z" fill="#2e2520"/><path d="M11.300 8.800c.5 1.200 2.900 1.200 3.400 0v1.300c-.5.900-2.900.9-3.400 0z" fill="#3a2d27"/></g></g></svg><div class="pn"><a>Francesco Bruno</a><em>PR and Event Manager</em></div><div class="tc" style="left:282.8px;top:0px"><b>8</b> <i>h</i> <b>25</b> <i>m</i></div><div class="tc" style="left:371.8px;top:0px"><b>7</b> <i>h</i> <b>40</b> <i>m</i><svg class="st" width="10" height="10" viewBox="0 0 10 10"><circle cx="5" cy="5" r="4.6" fill="#e0483e"/><rect x="4.35" y="2.2" width="1.3" height="3.7" rx=".5" fill="#fff"/><circle cx="5" cy="7.4" r=".8" fill="#fff"/></svg></div><div class="tc" style="left:460.8px;top:0px"><b>6</b> <i>h</i> <b>55</b> <i>m</i></div><div class="tc" style="left:549.9px;top:0px"><b>7</b> <i>h</i> <b>40</b> <i>m</i></div><div class="tc" style="left:639.0px;top:0px"><b>7</b> <i>h</i> <b>56</b> <i>m</i><svg class="st" width="10" height="10" viewBox="0 0 10 10"><circle cx="5" cy="5" r="4.6" fill="#2fa8ee"/><path d="M2.9 5.1l1.5 1.5 2.8-3" fill="none" stroke="#fff" stroke-width="1.2" stroke-linecap="round" stroke-linejoin="round"/></svg></div><div class="tc" style="left:906.1px;top:0px"><b>8</b> <i>h</i></div></div>
<div class="gr" style="top:301.8px;height:26.6px"><span>SMM</span></div>
<div class="pr sp" style="top:328.4px;height:38.0px"><svg class="av" style="" width="25.3" height="25.3" viewBox="0 0 26 26"><defs><clipPath id="a7"><circle cx="13" cy="13" r="13"/></clipPath></defs><g clip-path="url(#a7)"><g filter="url(#avb)"><g transform="translate(13 11.500) scale(1.2) translate(-13 -11.500)"><rect width="26" height="26" fill="#e6e6e6"/><path d="M5.500 11c0-5.500 3-9 7.500-9 4 0 6.500 3 6.300 8-.2 4 1.200 7 .7 11-.3 2.500-1.500 4-3 5H6.500C4 24 3 21 3.500 18c.5-3 2-4 2-7z" fill="#2f2f2f"/><path d="M20 17c2 .5 5 2 5.500 9H17z" fill="#cfcfcf"/><path d="M11.500 16h3.600l.5 10h-5z" fill="#c4c0bc"/><ellipse cx="13.700" cy="10.500" rx="3.500" ry="4.800" fill="#cfcbc7"/><path d="M10 9c.5-3.500 2.500-5 5-4.500-1.800.8-3 2.300-3.300 4.500-.3 2.500.3 5-.7 8-1.500-2-1.300-5.500-1-8z" fill="#262626"/><ellipse cx="13.900" cy="9.700" rx="2.400" ry=".7" fill="#8b8784"/></g></g></g></svg><div class="pn"><a>Valentina Ricci</a><em>Head of SMM</em></div><div class="tc" style="left:282.8px;top:2.9px"><b>6</b> <i>h</i> <b>30</b> <i>m</i></div><div class="tc" style="left:371.8px;top:2.9px"><b>6</b> <i>h</i> <b>43</b> <i>m</i></div><div class="tc" style="left:460.8px;top:2.9px"><b>7</b> <i>h</i> <b>56</b> <i>m</i></div><div class="tc" style="left:549.9px;top:2.9px"><b>8</b> <i>h</i> <b>25</b> <i>m</i></div><div class="tc" style="left:639.0px;top:2.9px"><b>7</b> <i>h</i> <b>40</b> <i>m</i></div><div class="tc" style="left:906.1px;top:2.9px"><b>7</b> <i>h</i></div></div>
<div class="pr" style="top:365.4px;height:38.0px"><svg class="av" style="" width="25.3" height="25.3" viewBox="0 0 26 26"><defs><clipPath id="a8"><circle cx="13" cy="13" r="13"/></clipPath></defs><g clip-path="url(#a8)"><g filter="url(#avb)"><g transform="translate(13 11.500) scale(1.15) translate(-13 -11.500)"><rect width="26" height="26" fill="#f1f1f1"/><path d="M7 12c0-5.500 2.500-8.500 6.500-8.500S19.500 7 19.300 12c-.2 3.500 1.500 5.500 2 9 .3 2-.5 4-2 5H6c-1.500-1-2-3-1.500-5.500.6-3 2.500-5 2.500-8.500z" fill="#1c1c1c"/><path d="M10.500 17h4.500l1.500 9h-7z" fill="#e6e4e2"/><ellipse cx="13" cy="11.500" rx="3.300" ry="4.300" fill="#dcd8d5"/><path d="M9.500 10.500c.3-3.500 2-5.200 4.500-5-1.600.8-2.600 2.200-2.900 4.500-.4 2.600 0 4.500-.8 7-.9-1.800-1-4.200-.8-6.500z" fill="#151515"/><path d="M15 8c1 1 1.400 2.500 1.300 4.500l-1.800.5z" fill="#8e8b89"/></g></g></g></svg><div class="pn"><a>Jane Smith</a><em>Social media manager</em></div><div class="tc" style="left:282.8px;top:2.0px"><b>7</b> <i>h</i> <b>40</b> <i>m</i></div><div class="tc" style="left:371.8px;top:2.0px"><b>6</b> <i>h</i> <b>30</b> <i>m</i></div><div class="tc" style="left:460.8px;top:2.0px"><b>6</b> <i>h</i> <b>55</b> <i>m</i></div><div class="tc" style="left:549.9px;top:2.0px"><b>6</b> <i>h</i> <b>30</b> <i>m</i><svg class="st" width="10" height="10" viewBox="0 0 10 10"><circle cx="5" cy="5" r="4.6" fill="#2fa8ee"/><path d="M2.9 5.1l1.5 1.5 2.8-3" fill="none" stroke="#fff" stroke-width="1.2" stroke-linecap="round" stroke-linejoin="round"/></svg></div><div class="tc" style="left:639.0px;top:2.0px"><b>9</b> <i>h</i> <b>10</b> <i>m</i></div><div class="tc" style="left:906.1px;top:2.0px"><b>8</b> <i>h</i></div></div>
<div class="gr" style="top:402.4px;height:26.6px"><span>HR</span></div>
<div class="pr" style="top:429.0px;height:38.0px"><svg class="av" style="" width="25.3" height="25.3" viewBox="0 0 26 26"><defs><clipPath id="a9"><circle cx="13" cy="13" r="13"/></clipPath></defs><g clip-path="url(#a9)"><g filter="url(#avb)"><g transform="translate(13 11.500) scale(1.1) translate(-13 -11.500)"><rect width="26" height="26" fill="#14122a"/><path d="M6.500 12c0-5.500 2.700-9 6.500-9s6.500 3.500 6.500 9c0 5-2 9-3.500 12h-6c-1.500-3-3.500-7-3.500-12z" fill="#241a44"/><ellipse cx="13" cy="12" rx="4" ry="5.800" fill="#c0508e"/><path d="M13 6.200c2.200 0 4 2.600 4 5.800s-1.800 5.800-4 5.800z" fill="#3f63c8"/><path d="M9 10c0-2 1.500-3.800 4-3.800v5z" fill="#e6a23c"/><path d="M10 15.500c1 1.500 2 2.300 3 2.300v-4z" fill="#e0457e"/><path d="M10.500 17.500h5v4.500c-1.500 1.500-3.500 1.500-5 0z" fill="#7a3f9c"/><path d="M4 27c.3-3 2-5 9-5s8.700 2 9 5z" fill="#1c1a3c"/></g></g></g></svg><div class="pn"><a>Valeria Rossini</a><em>HR specialist</em></div><div class="tc" style="left:282.8px;top:0.9px"><b>6</b> <i>h</i> <b>30</b> <i>m</i></div><div class="tc" style="left:371.8px;top:0.9px"><b>6</b> <i>h</i> <b>55</b> <i>m</i></div><div class="tc" style="left:460.8px;top:0.9px"><b>9</b> <i>h</i> <b>10</b> <i>m</i></div><div class="tc" style="left:549.9px;top:0.9px"><b>7</b> <i>h</i> <b>40</b> <i>m</i></div><div class="tc" style="left:639.0px;top:0.9px"><b>9</b> <i>h</i> <b>20</b> <i>m</i></div><div class="tc" style="left:906.1px;top:0.9px"><b>9</b> <i>h</i></div></div>
<div class="gr" style="top:466.0px;height:26.6px"><span>Recruiting</span></div>
<div class="pr" style="top:492.6px;height:38.0px"><svg class="av" style="" width="25.3" height="25.3" viewBox="0 0 26 26"><defs><clipPath id="a10"><circle cx="13" cy="13" r="13"/></clipPath></defs><g clip-path="url(#a10)"><g filter="url(#avb)"><g transform="translate(13 11.500) scale(1.25) translate(-13 -11.500)"><rect width="26" height="26" fill="#ead9cd"/><rect x="0" y="0" width="26" height="8" fill="#e2cfc2"/><path d="M6.500 11c0-5 2.500-8.500 6.500-8.500s6.800 3.300 6.500 8.500c-.2 3.500 1.200 6 .8 9-.3 2.500-1.800 4.500-3.300 5.500h-9C6 24 5 21.500 5.200 19c.3-3 1.300-4.500 1.300-8z" fill="#a9713f"/><path d="M3 27c.3-4.500 3-7.500 10-7.500s9.700 3 10 7.500z" fill="#f3efea"/><path d="M11.300 15.500h3.500v4.300L13 21.500l-1.700-1.700z" fill="#dfae92"/><ellipse cx="13" cy="10.800" rx="3.500" ry="4.500" fill="#e9bea3"/><path d="M9.300 10c.3-3.500 2-5.300 4.700-5-1.700.8-2.700 2.200-3 4.500-.3 2.700-.2 6-1.500 9-.8-2.500-.5-5.800-.2-8.500z" fill="#c08a55"/><path d="M16.600 9.500c.6 3 .4 6.500 1.400 9.500.8-2 .7-6-.1-9z" fill="#b57c48"/></g></g></g></svg><div class="pn"><a>Elisabetta Chiesa</a><em>Recruiter</em></div><div class="tc" style="left:282.8px;top:1.9px"><b>7</b> <i>h</i> <b>55</b> <i>m</i></div><div class="tc" style="left:371.8px;top:1.9px"><b>7</b> <i>h</i> <b>10</b> <i>m</i></div><div class="tc" style="left:460.8px;top:1.9px"><b>9</b> <i>h</i> <b>20</b> <i>m</i></div><div class="tc" style="left:549.9px;top:1.9px"><b>6</b> <i>h</i> <b>30</b> <i>m</i></div><div class="tc" style="left:639.0px;top:1.9px"><b>9</b> <i>h</i> <b>10</b> <i>m</i></div><div class="tc" style="left:906.1px;top:1.9px"><b>9</b> <i>h</i></div></div>
<div class="gr" style="top:529.6px;height:26.6px"><span>Reparto vendite</span></div>
<div class="pr sp" style="top:556.2px;height:38.0px"><svg class="av" style="" width="25.3" height="25.3" viewBox="0 0 26 26"><defs><clipPath id="a11"><circle cx="13" cy="13" r="13"/></clipPath></defs><g clip-path="url(#a11)"><g filter="url(#avb)"><rect width="26" height="26" fill="#f4f6f7"/><path d="M0 5h14v21H0z" fill="#cfe1ea"/><rect x="3.500" y="1" width="2.800" height="25" fill="#2c4d56"/><rect x="6.300" y="3" width="2.500" height="23" fill="#9cc0cc"/><path d="M17 12c4 1 8 4 8 8v6h-8z" fill="#d7e6ee"/><path d="M9 16c0-4.500 2.300-7.500 5.800-7.500s5.800 3 5.700 7.500c-.1 3 .7 5 .5 7.500L19 27h-9.500c-1.300-1.300-1.500-3-1.200-5 .3-2.200.7-3.500.7-6z" fill="#caa26c"/><path d="M8 27c.3-2.500 2-4 6.800-4s6.500 1.500 6.800 4z" fill="#e7e2dc"/><ellipse cx="14.800" cy="16.300" rx="3.300" ry="4.200" fill="#e0b195"/><path d="M11.300 15.500c.3-3.300 1.800-4.800 4.200-4.600-1.500.8-2.300 2-2.600 4-.3 2.500-.2 5-1.200 7.500-.8-2.200-.6-4.800-.4-6.900z" fill="#d9b57e"/></g></g></svg><div class="pn"><a>Francesca Arletti</a><em>Sales manager</em></div><div class="tc" style="left:282.8px;top:1.0px"><b>9</b> <i>h</i> <b>33</b> <i>m</i></div><div class="tc" style="left:371.8px;top:1.0px"><b>9</b> <i>h</i> <b>25</b> <i>m</i></div><div class="tc" style="left:460.8px;top:1.0px"><b>9</b> <i>h</i> <b>20</b> <i>m</i></div><div class="tc" style="left:549.9px;top:1.0px"><b>7</b> <i>h</i> <b>55</b> <i>m</i></div><div class="tc" style="left:639.0px;top:1.0px"><b>7</b> <i>h</i> <b>44</b> <i>m</i><svg class="st" width="10" height="10" viewBox="0 0 10 10"><circle cx="5" cy="5" r="4.6" fill="#e0483e"/><rect x="4.35" y="2.2" width="1.3" height="3.7" rx=".5" fill="#fff"/><circle cx="5" cy="7.4" r=".8" fill="#fff"/></svg></div><div class="tc" style="left:906.1px;top:1.0px"><b>9</b> <i>h</i></div></div>
      <div class="wo" style="left:193.7px;width:90.0px"></div><div class="wo" style="left:728.0px;width:89.0px"></div><div class="wo" style="left:817.0px;width:90.0px"></div>
    </div>
  </div>
</div>
</div>
<div id="phone" style="position:absolute;left:985.0px;top:210.6px;width:311.300px;height:700.900px;border-radius:32px;background:#fff;box-shadow:5px 12px 30px rgba(25,30,60,.21),0 1px 6px rgba(25,30,60,.08);overflow:hidden"><style>.pt{font-size:14px;line-height:20px;font-weight:700;color:#1f2226;white-space:nowrap}.ps{font-size:9px;line-height:12px;color:#b9bdc2;text-align:center;white-space:nowrap;letter-spacing:.25px}</style><div style="position:absolute;left:28.5px;top:12.9px;font-size:14px;line-height:18px;font-weight:700;color:#111;white-space:nowrap">10:22</div><svg style="position:absolute;left:229.5px;top:15.9px;width:18.0px;height:12.0px;" viewBox="0 0 18 12"><rect x=".5" y="7.500" width="3" height="4" rx=".8" fill="#111"/><rect x="5" y="5.500" width="3" height="6" rx=".8" fill="#111"/><rect x="9.500" y="3" width="3" height="8.500" rx=".8" fill="#cfd1d4"/><rect x="14" y=".5" width="3" height="11" rx=".8" fill="#cfd1d4"/></svg><svg style="position:absolute;left:252.8px;top:15.7px;width:14.0px;height:11.0px;" viewBox="0 0 14 11" fill="none" stroke="#0b0b0b" stroke-width="2.100"><path d="M1.100 4.100A8.300 8.300 0 0 1 12.900 4.100"/><path d="M3.600 6.700A4.900 4.900 0 0 1 10.400 6.700"/><path d="M5.300 8.500A2.500 2.500 0 0 1 8.700 8.500L7 10.500z" fill="#0b0b0b" stroke="none"/></svg><svg style="position:absolute;left:272.5px;top:15.9px;width:26.0px;height:12.0px;" viewBox="0 0 26 12"><rect x=".6" y=".8" width="20.500" height="10.400" rx="2.600" fill="none" stroke="#b9bbbe" stroke-width="1"/><rect x="2.200" y="2.400" width="10.500" height="7.200" rx="1.300" fill="#111"/><path d="M22.300 4v4c1-.3 1.600-1 1.600-2s-.6-1.700-1.600-2z" fill="#b9bbbe"/></svg><svg style="position:absolute;left:10.5px;top:51.4px;width:14.0px;height:12.0px;" viewBox="0 0 14 12" fill="none" stroke="#c2c6cb" stroke-width="1.200" stroke-linecap="round" stroke-linejoin="round"><path d="M13 6H1.500M6 1.500 1.500 6 6 10.500"/></svg><div style="position:absolute;left:34.0px;top:47.4px;font-size:16.500px;line-height:20px;color:#2b2f34;letter-spacing:.08px;white-space:nowrap">Flussi di lavoro</div><svg style="position:absolute;left:238.0px;top:48.9px;width:18.0px;height:17.0px;" viewBox="0 0 18 17" fill="none" stroke="#b2b4b8" stroke-width="1.450" stroke-linecap="round"><path d="M1.600 9.300h7.200M1.600 12.300h7.200M1.600 15.300h7.200" stroke-linecap="butt"/><path d="M4 6.600A5.200 5.200 0 1 1 11.600 11.300l3.700 3.700"/></svg><svg style="position:absolute;left:277.9px;top:54.4px;width:18.0px;height:6.0px;" viewBox="0 0 18 6" fill="none" stroke="#b3b7bc" stroke-width="1.300"><circle cx="3" cy="3" r="1.900"/><circle cx="9.300" cy="3" r="1.900"/><circle cx="15.600" cy="3" r="1.900"/></svg><div style="position:absolute;left:0.0px;top:76.2px;width:311.3px;height:9.4px;background:#eef1f5"></div><div class="pt" style="position:absolute;left:14.5px;top:98.1px;letter-spacing:-.15px">Approva il viaggio d'affari per</div><div class="pt" style="position:absolute;left:14.5px;top:118.0px;letter-spacing:-.09px">(giuliaverdi@mail.com) Giulia Verdi...</div><div style="position:absolute;left:14.5px;top:145.6px;font-size:9.700px;line-height:12px;color:#b9bdc2;letter-spacing:-0.04px;white-space:nowrap">BUSINESS TRIP</div><div style="position:absolute;left:14.5px;top:164.9px;font-size:11px;line-height:14px;color:#b4b8bd;letter-spacing:-.18px;white-space:nowrap">Oggi 10:21</div><div style="position:absolute;left:276.0px;top:102.4px;width:19.6px;height:19.6px;border:1.500px solid #e6e8eb;border-radius:3.500px"></div><div style="position:absolute;left:276.1px;top:143.2px;width:16.2px;height:16.2px;border-radius:50%;background:#f5524f;color:#fff;font-size:8.500px;line-height:16.200px;text-align:center">1</div><div style="position:absolute;left:4.0px;top:193.4px;width:303.0px;height:82.3px;border:1px solid #eceef1;border-radius:6px"></div><svg style="position:absolute;left:238.0px;top:193.4px;width:15.0px;height:82.3px;" viewBox="0 0 15 82.300" fill="none" stroke="#eceef1" stroke-width="1"><path d="M1.800 0 12.200 42 1.800 82.300"/></svg><div style="position:absolute;left:52.0px;top:235.1px;width:148.0px;height:1.0px;background:#e9ebee"></div><div class="ps" style="position:absolute;left:19.0px;top:204.0px;width:40.0px;">Da</div><svg class="av" style="position:absolute;left:25.9px;top:222.5px;" width="26.2" height="26.2" viewBox="0 0 26 26"><defs><clipPath id="pg1"><circle cx="13" cy="13" r="13"/></clipPath></defs><g clip-path="url(#pg1)"><g filter="url(#avb)"><g transform="translate(13 11.500) scale(1.22) translate(-13 -11.500)"><rect width="26" height="26" fill="#b89f8a"/><rect x="17" y="0" width="9" height="14" fill="#c9b39c"/><rect x="0" y="0" width="7" height="12" fill="#a78b76"/><path d="M8.200 10.500c-.6-4.500 1.500-7.700 4.900-7.700s5.400 3 4.800 7.600c-.3 2.500-1 4.200-2 5.600h-5.700c-1-1.400-1.700-3-2-5.500z" fill="#3a2a23"/><path d="M2.500 27c.2-5.600 3.500-9 10.500-9s10.300 3.400 10.500 9z" fill="#6e7766"/><path d="M10.300 18.300 13 17.600l2.800.7.800 8.700H9.500z" fill="#ece6df"/><path d="M11.400 14.500h3.300v3.600l-1.700 1.200-1.600-1.200z" fill="#d5a58b"/><ellipse cx="13.050" cy="10.500" rx="3.200" ry="4.100" fill="#ddb097"/><path d="M9.800 9.300c.3-2.700 1.600-4 3.300-4s3 1.300 3.300 4c-1-1.500-2-2.300-3.300-2.300s-2.300.8-3.300 2.300z" fill="#3a2a23"/></g></g></g></svg><div class="ps" style="position:absolute;left:9.0px;top:254.2px;width:60.0px;">25 secondi</div><div class="ps" style="position:absolute;left:98.8px;top:204.0px;width:60.0px;">In corso</div><svg class="av" style="position:absolute;left:113.3px;top:222.5px;" width="26.2" height="26.2" viewBox="0 0 26 26"><defs><clipPath id="ps1"><circle cx="13" cy="13" r="13"/></clipPath></defs><g clip-path="url(#ps1)"><g filter="url(#avb)"><g transform="translate(13 11.500) scale(1.2) translate(-13 -11.500)"><rect width="26" height="26" fill="#f1eee9"/><rect x="18.500" width="8" height="26" fill="#e3d6c2"/><rect x="0" y="9" width="6" height="9" fill="#d9d2bd"/><path d="M8.300 9.500c0-4 2.100-6.600 5.400-6.600 3.200 0 5 2.400 5 5.800 0 2.500-.4 4.500.4 7l-3 3H7.500c-1.400 0-2-1.500-1.600-3 .9-3 2.400-3.400 2.400-6.200z" fill="#3b2a25"/><path d="M3.500 27c.3-5.500 4-8.500 9.500-8.500s9.800 3 10.200 8.500z" fill="#e2e8f0"/><path d="M12 15h3.600v4.300L13.600 21 12 19.300z" fill="#dcae96"/><ellipse cx="14.100" cy="10.300" rx="3.300" ry="4.300" fill="#e4bca5"/><path d="M10.800 8.500c.5-2.500 2-3.700 4.300-3.500-1.500.5-2.800 1.800-3.200 4-.3 2.500.2 5.500-.8 8.500s-2 5-2.400 6.500L5.600 23c.4-3 1.600-4.600 2.700-7 1-2.300 2-4.600 2.500-7.500z" fill="#33231f"/></g></g></g></svg><svg style="position:absolute;left:130.4px;top:218.8px;width:15.0px;height:15.0px;" viewBox="0 0 15 15"><circle cx="7.500" cy="7.500" r="7.500" fill="#fff"/><circle cx="7.500" cy="7.500" r="6.300" fill="#1c9fe6"/><path d="M7.300 4.300v3.700h2.900" fill="none" stroke="#fff" stroke-width="1.500"/></svg><div class="ps" style="position:absolute;left:99.0px;top:254.2px;width:60.0px;">21 secondi</div><div style="position:absolute;left:195.7px;top:208.2px;width:34.5px;height:4.5px;background:#eceef0;border-radius:2px"></div><div style="position:absolute;left:199.3px;top:221.4px;width:27.2px;height:27.2px;background:#ecedf0;border-radius:50%"></div><div style="position:absolute;left:199.8px;top:257.3px;width:26.2px;height:4.5px;background:#eceef0;border-radius:2px"></div><div class="ps" style="position:absolute;left:246.4px;top:204.0px;width:60.0px;">In corso</div><svg style="position:absolute;left:267.4px;top:225.4px;width:18.0px;height:18.0px;" viewBox="0 0 18 18" fill="none" stroke="#dfe2e6" stroke-width="1.500"><circle cx="9" cy="9" r="7.300"/><path d="M8.800 5v4.300h3.400"/></svg><div class="ps" style="position:absolute;left:246.4px;top:254.2px;width:60.0px;color:#3b7fc4;font-size:9.500px">Registro</div><div style="position:absolute;left:14.5px;top:297.3px;width:136.3px;height:29.5px;border:1.500px solid #b9d84a;border-radius:6px"></div><svg style="position:absolute;left:52.5px;top:305.9px;width:14.0px;height:12.0px;" viewBox="0 0 14 12" fill="none" stroke="#9bc81a" stroke-width="2.300"><path d="M1.200 6.600l3.800 3.600L12.800 1.400"/></svg><div style="position:absolute;left:71.7px;top:303.9px;font-size:13px;line-height:16px;color:#9bc81a;letter-spacing:-.13px;white-space:nowrap">Approva</div><div style="position:absolute;left:160.7px;top:297.3px;width:136.0px;height:29.5px;border:1.500px solid #e1e3e6;border-radius:6px"></div><svg style="position:absolute;left:204.5px;top:305.9px;width:12.0px;height:12.0px;" viewBox="0 0 12 12" fill="none" stroke="#4d5661" stroke-width="2.500"><path d="M1.200 1.200l9.600 9.600M10.800 1.200 1.200 10.800"/></svg><div style="position:absolute;left:221.7px;top:303.9px;font-size:13px;line-height:16px;color:#4f5660;letter-spacing:-.13px;white-space:nowrap">Rifiuta</div><div style="position:absolute;left:0.0px;top:346.5px;width:311.3px;height:9.4px;background:#eef1f5"></div><div class="pt" style="position:absolute;left:14.5px;top:371.0px;letter-spacing:-.15px">Approva la richiesta di acquisto</div><div class="pt" style="position:absolute;left:14.5px;top:390.9px;letter-spacing:-.09px">"Acquisto materiale"</div><div style="position:absolute;left:14.5px;top:415.9px;font-size:9.700px;line-height:12px;color:#b9bdc2;letter-spacing:-0.53px;white-space:nowrap">RICHIESTA DI ACQUISTO</div><div style="position:absolute;left:14.5px;top:435.2px;font-size:11px;line-height:14px;color:#b4b8bd;letter-spacing:-.18px;white-space:nowrap">Oggi 10:20</div><div style="position:absolute;left:276.0px;top:372.7px;width:19.6px;height:19.6px;border:1.500px solid #e6e8eb;border-radius:3.500px"></div><div style="position:absolute;left:276.1px;top:413.5px;width:16.2px;height:16.2px;border-radius:50%;background:#f5524f;color:#fff;font-size:8.500px;line-height:16.200px;text-align:center">1</div><div style="position:absolute;left:4.0px;top:463.7px;width:303.0px;height:82.3px;border:1px solid #eceef1;border-radius:6px"></div><svg style="position:absolute;left:238.0px;top:463.7px;width:15.0px;height:82.3px;" viewBox="0 0 15 82.300" fill="none" stroke="#eceef1" stroke-width="1"><path d="M1.800 0 12.200 42 1.800 82.300"/></svg><div style="position:absolute;left:52.0px;top:505.4px;width:148.0px;height:1.0px;background:#e9ebee"></div><div class="ps" style="position:absolute;left:19.0px;top:474.3px;width:40.0px;">Da</div><svg class="av" style="position:absolute;left:25.9px;top:492.8px;" width="26.2" height="26.2" viewBox="0 0 26 26"><defs><clipPath id="pg2"><circle cx="13" cy="13" r="13"/></clipPath></defs><g clip-path="url(#pg2)"><g filter="url(#avb)"><g transform="translate(13 11.500) scale(1.22) translate(-13 -11.500)"><rect width="26" height="26" fill="#b89f8a"/><rect x="17" y="0" width="9" height="14" fill="#c9b39c"/><rect x="0" y="0" width="7" height="12" fill="#a78b76"/><path d="M8.200 10.500c-.6-4.500 1.500-7.700 4.900-7.700s5.400 3 4.800 7.600c-.3 2.500-1 4.200-2 5.600h-5.700c-1-1.400-1.700-3-2-5.500z" fill="#3a2a23"/><path d="M2.500 27c.2-5.600 3.500-9 10.500-9s10.300 3.400 10.500 9z" fill="#6e7766"/><path d="M10.300 18.300 13 17.600l2.800.7.800 8.700H9.500z" fill="#ece6df"/><path d="M11.400 14.500h3.300v3.600l-1.700 1.200-1.600-1.200z" fill="#d5a58b"/><ellipse cx="13.050" cy="10.500" rx="3.200" ry="4.100" fill="#ddb097"/><path d="M9.800 9.300c.3-2.700 1.600-4 3.300-4s3 1.300 3.300 4c-1-1.500-2-2.300-3.300-2.300s-2.300.8-3.300 2.300z" fill="#3a2a23"/></g></g></g></svg><div class="ps" style="position:absolute;left:9.0px;top:524.5px;width:60.0px;">22 secondi</div><div class="ps" style="position:absolute;left:98.8px;top:474.3px;width:60.0px;">In corso</div><svg class="av" style="position:absolute;left:113.3px;top:492.8px;" width="26.2" height="26.2" viewBox="0 0 26 26"><defs><clipPath id="ps2"><circle cx="13" cy="13" r="13"/></clipPath></defs><g clip-path="url(#ps2)"><g filter="url(#avb)"><g transform="translate(13 11.500) scale(1.2) translate(-13 -11.500)"><rect width="26" height="26" fill="#f1eee9"/><rect x="18.500" width="8" height="26" fill="#e3d6c2"/><rect x="0" y="9" width="6" height="9" fill="#d9d2bd"/><path d="M8.300 9.500c0-4 2.100-6.600 5.400-6.600 3.200 0 5 2.400 5 5.800 0 2.500-.4 4.500.4 7l-3 3H7.500c-1.400 0-2-1.500-1.600-3 .9-3 2.400-3.400 2.400-6.200z" fill="#3b2a25"/><path d="M3.500 27c.3-5.500 4-8.500 9.500-8.500s9.800 3 10.200 8.500z" fill="#e2e8f0"/><path d="M12 15h3.600v4.300L13.600 21 12 19.300z" fill="#dcae96"/><ellipse cx="14.100" cy="10.300" rx="3.300" ry="4.300" fill="#e4bca5"/><path d="M10.800 8.500c.5-2.500 2-3.700 4.300-3.500-1.500.5-2.800 1.800-3.200 4-.3 2.500.2 5.500-.8 8.500s-2 5-2.400 6.500L5.600 23c.4-3 1.600-4.600 2.700-7 1-2.300 2-4.600 2.500-7.500z" fill="#33231f"/></g></g></g></svg><svg style="position:absolute;left:130.4px;top:489.1px;width:15.0px;height:15.0px;" viewBox="0 0 15 15"><circle cx="7.500" cy="7.500" r="7.500" fill="#fff"/><circle cx="7.500" cy="7.500" r="6.300" fill="#1c9fe6"/><path d="M7.300 4.300v3.700h2.900" fill="none" stroke="#fff" stroke-width="1.500"/></svg><div class="ps" style="position:absolute;left:99.0px;top:524.5px;width:60.0px;">52 secondi</div><div style="position:absolute;left:195.7px;top:478.5px;width:34.5px;height:4.5px;background:#eceef0;border-radius:2px"></div><div style="position:absolute;left:199.3px;top:491.7px;width:27.2px;height:27.2px;background:#ecedf0;border-radius:50%"></div><div style="position:absolute;left:199.8px;top:527.6px;width:26.2px;height:4.5px;background:#eceef0;border-radius:2px"></div><div class="ps" style="position:absolute;left:246.4px;top:474.3px;width:60.0px;">In corso</div><svg style="position:absolute;left:267.4px;top:495.7px;width:18.0px;height:18.0px;" viewBox="0 0 18 18" fill="none" stroke="#dfe2e6" stroke-width="1.500"><circle cx="9" cy="9" r="7.300"/><path d="M8.800 5v4.300h3.400"/></svg><div class="ps" style="position:absolute;left:246.4px;top:524.5px;width:60.0px;color:#3b7fc4;font-size:9.500px">Registro</div><div style="position:absolute;left:14.5px;top:567.6px;width:136.3px;height:29.5px;border:1.500px solid #b9d84a;border-radius:6px"></div><svg style="position:absolute;left:52.5px;top:576.2px;width:14.0px;height:12.0px;" viewBox="0 0 14 12" fill="none" stroke="#9bc81a" stroke-width="2.300"><path d="M1.200 6.600l3.800 3.600L12.800 1.400"/></svg><div style="position:absolute;left:71.7px;top:574.2px;font-size:13px;line-height:16px;color:#9bc81a;letter-spacing:-.13px;white-space:nowrap">Approva</div><div style="position:absolute;left:160.7px;top:567.6px;width:136.0px;height:29.5px;border:1.500px solid #e1e3e6;border-radius:6px"></div><svg style="position:absolute;left:204.5px;top:576.2px;width:12.0px;height:12.0px;" viewBox="0 0 12 12" fill="none" stroke="#4d5661" stroke-width="2.500"><path d="M1.200 1.200l9.600 9.600M10.800 1.200 1.200 10.800"/></svg><div style="position:absolute;left:221.7px;top:574.2px;font-size:13px;line-height:16px;color:#4f5660;letter-spacing:-.13px;white-space:nowrap">Rifiuta</div><div style="position:absolute;left:249.8px;top:560.3px;width:47.6px;height:47.6px;border-radius:12px;background:rgba(190,191,194,.86)"></div><svg style="position:absolute;left:264.5px;top:574.9px;width:18.0px;height:18.0px;" viewBox="0 0 18 18" stroke="#fff" stroke-width="1.100" opacity=".8"><path d="M9 1v16M1 9h16"/></svg><div style="position:absolute;left:0.0px;top:615.4px;width:311.3px;height:8.3px;background:#eef1f5"></div><div style="position:absolute;left:0.0px;top:623.7px;width:311.3px;height:80.0px;background:#fff"></div><div style="position:absolute;left:14.0px;top:630.4px;width:24.0px;height:24.0px;"><svg width="24" height="24" viewBox="0 0 24 24" fill="none" stroke="#adb0b4" stroke-width="1.450" stroke-linejoin="round"><path d="M5.500 4.500h13a2 2 0 0 1 2 2v8a2 2 0 0 1-2 2H11l-3.800 3v-3H5.500a2 2 0 0 1-2-2v-8a2 2 0 0 1 2-2z"/><path d="M7.500 9h9M7.500 12h6" stroke-linecap="round"/></svg></div><div style="position:absolute;left:-14.0px;top:656.9px;width:80.0px;text-align:center;font-size:11px;line-height:14px;color:#b7babf;letter-spacing:-0.05px;white-space:nowrap">Messenger</div><div style="position:absolute;left:78.6px;top:630.4px;width:24.0px;height:24.0px;"><svg width="24" height="24" viewBox="0 0 24 24" fill="none" stroke="#adb0b4" stroke-width="1.450" stroke-linecap="round" stroke-linejoin="round"><circle cx="12" cy="12.300" r="8.300"/><path d="M8.300 12.500l2.700 2.700 4.900-5.400"/></svg></div><div style="position:absolute;left:50.6px;top:656.9px;width:80.0px;text-align:center;font-size:11px;line-height:14px;color:#b7babf;letter-spacing:0.11px;white-space:nowrap">Incarichi</div><div style="position:absolute;left:143.7px;top:630.4px;width:24.0px;height:24.0px;"><svg width="24" height="24" viewBox="0 0 24 24" fill="none" stroke="#adb0b4" stroke-width="1.450" stroke-linejoin="round"><path d="M6 4.500h10.500a1.500 1.500 0 0 1 1.500 1.500v14H6a1.500 1.500 0 0 1-1.500-1.500V6A1.500 1.500 0 0 1 6 4.500z"/><path d="M18 8h1.800v10.200a1.800 1.800 0 0 1-1.800 1.800"/><path d="M7.300 8.500h1.400M10.500 8.500h4.800M7.300 11.500h1.400M10.500 11.500h4.800M7.300 14.500h5" stroke-linecap="round"/></svg></div><div style="position:absolute;left:115.7px;top:656.9px;width:80.0px;text-align:center;font-size:11px;line-height:14px;color:#b7babf;letter-spacing:0px;white-space:nowrap">Feed</div><div style="position:absolute;left:207.7px;top:630.4px;width:24.0px;height:24.0px;"><svg width="24" height="24" viewBox="0 0 24 24" fill="none" stroke="#adb0b4" stroke-width="1.450" stroke-linejoin="round"><path d="M3.800 6.200a1.500 1.500 0 0 1 1.500-1.500h4.200l2.300 2.500h7a1.500 1.500 0 0 1 1.500 1.500v9.600a1.500 1.500 0 0 1-1.500 1.500H5.300a1.500 1.500 0 0 1-1.500-1.500z"/></svg></div><div style="position:absolute;left:179.7px;top:656.9px;width:80.0px;text-align:center;font-size:11px;line-height:14px;color:#b7babf;letter-spacing:0px;white-space:nowrap">Progetti</div><div style="position:absolute;left:272.7px;top:630.4px;width:24.0px;height:24.0px;"><svg width="24" height="24" viewBox="0 0 24 24" fill="none" stroke="#1f2226" stroke-width="1.500"><rect x="4.600" y="5" width="6.200" height="6.200" rx="1.600"/><rect x="13.200" y="5" width="6.200" height="6.200" rx="1.600"/><rect x="4.600" y="13.600" width="6.200" height="6.200" rx="1.600"/><rect x="13.200" y="13.600" width="6.200" height="6.200" rx="1.600"/></svg></div><div style="position:absolute;left:244.7px;top:656.9px;width:80.0px;text-align:center;font-size:11px;line-height:14px;color:#1f2226;letter-spacing:-0.13px;white-space:nowrap">Menu</div><div style="position:absolute;left:100.1px;top:625.6px;width:15.0px;height:15.0px;border-radius:7.500px;background:#f5524f;color:#fff;font-size:9px;line-height:15px;text-align:center">1</div><div style="position:absolute;left:164.6px;top:625.6px;width:15.0px;height:15.0px;border-radius:7.500px;background:#f5524f;color:#fff;font-size:9px;line-height:15px;text-align:center">2</div><div style="position:absolute;left:293.0px;top:625.6px;width:22.0px;height:15.0px;border-radius:7.500px;background:#f5524f;color:#fff;font-size:9px;line-height:15px;text-align:center">14</div><div style="position:absolute;left:98.0px;top:690.0px;width:115.4px;height:5.0px;background:#050505;border-radius:3px"></div></div>
</body></html>
